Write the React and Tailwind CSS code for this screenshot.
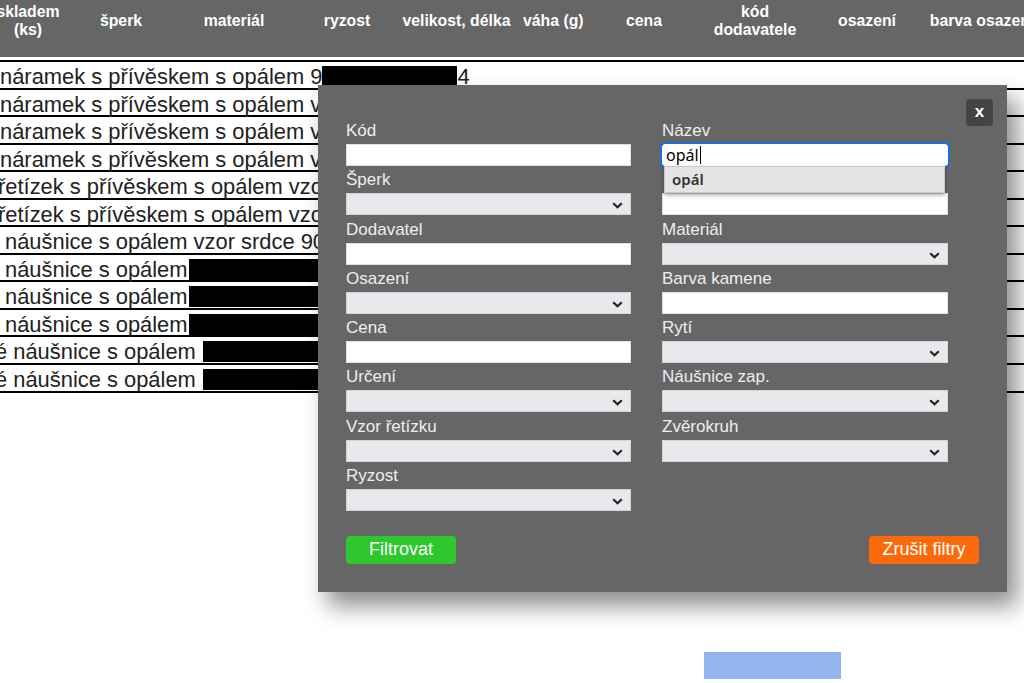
import React from "react";

const headerCols = [
  { w: "w-[100px]", t: ["skladem", "(ks)"] },
  { w: "w-[86px]", t: ["šperk"] },
  { w: "w-[140px]", t: ["materiál"] },
  { w: "w-[86px]", t: ["ryzost"] },
  { w: "w-[133px]", t: ["velikost, délka"] },
  { w: "w-[60px]", t: ["váha (g)"] },
  { w: "w-[122px]", t: ["cena"] },
  { w: "w-[100px]", t: ["kód", "dodavatele"] },
  { w: "w-[124px]", t: ["osazení"] },
  { w: "w-[106px]", t: ["barva osazení"] },
];

const rows = [
  { off: "ml-0", pre: "náramek s přívěskem s opálem 9", box: "w-[135px]", post: "4" },
  { off: "ml-0", pre: "náramek s přívěskem s opálem vzor" },
  { off: "ml-0", pre: "náramek s přívěskem s opálem vzor" },
  { off: "ml-0", pre: "náramek s přívěskem s opálem vzor" },
  { off: "-ml-[2px]", pre: "řetízek s přívěskem s opálem vzor" },
  { off: "-ml-[2px]", pre: "řetízek s přívěskem s opálem vzor" },
  { off: "ml-[5px]", pre: "náušnice s opálem vzor srdce 90" },
  { off: "ml-[5px]", pre: "náušnice s opálem", box: "w-[133px] ml-[1px]" },
  { off: "ml-[5px]", pre: "náušnice s opálem", box: "w-[133px] ml-[1px]" },
  { off: "ml-[5px]", pre: "náušnice s opálem", box: "w-[133px] ml-[1px]" },
  { off: "-ml-[5px]", pre: "é náušnice s opálem", box: "w-[133px] ml-[7px]" },
  { off: "-ml-[5px]", pre: "é náušnice s opálem", box: "w-[133px] ml-[7px]" },
];

function Chevron() {
  return (
    <svg width="11" height="7" viewBox="0 0 11 7" className="absolute right-[7px] top-[8px]">
      <polyline points="1.2,1.2 5.5,5.3 9.8,1.2" fill="none" stroke="#222" strokeWidth="2.2" />
    </svg>
  );
}

function Field({ label, type }) {
  return (
    <div className="mb-[4.3px]">
      <div className="h-[23px] text-[17px] leading-[20px] text-[#eeeeee] whitespace-nowrap">{label}</div>
      {type === "select" ? (
        <div className="relative h-[22px] bg-[#e9e9ed] border border-[#d4d4d8]">
          <Chevron />
        </div>
      ) : (
        <div className="h-[22px] bg-white border border-[#e0e0e0]"></div>
      )}
    </div>
  );
}

export default function App() {
  const left = [
    ["Kód", "input"],
    ["Šperk", "select"],
    ["Dodavatel", "input"],
    ["Osazení", "select"],
    ["Cena", "input"],
    ["Určení", "select"],
    ["Vzor řetízku", "select"],
    ["Ryzost", "select"],
  ];
  const right = [
    ["\u00a0", "input"],
    ["Materiál", "select"],
    ["Barva kamene", "input"],
    ["Rytí", "select"],
    ["Náušnice zap.", "select"],
    ["Zvěrokruh", "select"],
  ];
  return (
    <div className="relative w-[1024px] h-[683px] overflow-hidden bg-white font-['Liberation_Sans',Arial,sans-serif]">
      {/* header */}
      <div className="h-[57px] bg-[#666666] overflow-hidden">
        <div className="h-[42px] flex items-center -ml-[22px] text-[15.8px] leading-[18px] font-bold text-white">
          {headerCols.map((c, i) => (
            <div key={i} className={`${c.w} shrink-0 text-center whitespace-nowrap`}>
              {c.t.map((l, j) => (
                <div key={j}>{l}</div>
              ))}
            </div>
          ))}
        </div>
      </div>

      {/* table rows */}
      <div className="mt-[3px] border-t-2 border-black">
        {rows.map((r, i) => (
          <div
            key={i}
            className="h-[27.55px] border-b-2 border-black flex items-start text-[21.9px] leading-[20.4px] text-[#222] whitespace-nowrap"
          >
            <div className={`${r.off} pt-[5px] flex items-start`}>
              <span>{r.pre}</span>
              {r.box && <span className={`${r.box} inline-block h-[21px] mt-[-1px] bg-black`}></span>}
              {r.post && <span>{r.post}</span>}
            </div>
          </div>
        ))}
      </div>

      {/* blue bar */}
      <div className="mt-[259px] ml-[704px] w-[137px] h-[27px] bg-[#94b4f0]"></div>

      {/* modal */}
      <div className="absolute left-[318px] top-[85px] w-[689px] h-[507px] bg-[#666666] shadow-[10px_14px_22px_rgba(0,0,0,0.45)]">
        <div className="absolute right-[14px] top-[14px] w-[27px] h-[27px] rounded-[4px] bg-[#444444] flex items-center justify-center text-white font-bold text-[17px] leading-none pb-[2px]">
          x
        </div>
        <div className="pt-[36px] pl-[28px] grid grid-cols-[285px_286px] gap-x-[31px]">
          <div>
            {left.map(([l, t]) => (
              <Field key={l} label={l} type={t} />
            ))}
          </div>
          <div>
            <div className="mb-[4.3px] relative">
              <div className="h-[23px] text-[17px] leading-[20px] text-[#eeeeee]">Název</div>
              <div className="h-[22px] bg-white outline-2 outline-[#1a6fe0] rounded-[3px] flex items-center pl-[4px] font-['Noto_Sans',sans-serif] text-[16px] text-black">
                <span>opál</span>
                <span className="inline-block w-[1px] h-[18px] bg-black ml-[1px]"></span>
              </div>
            </div>
            <div className="relative">
              <div className="absolute left-[2px] top-[-4.3px] w-[281px] h-[27px] z-10 bg-[#e4e4e4] border border-[#c8c8c8] shadow-[0_2px_4px_rgba(0,0,0,0.35)] flex items-center pl-[7px] font-['Noto_Sans',sans-serif] text-[15px] font-semibold text-[#333]">
                opál
              </div>
              {right.map(([l, t], i) => (
                <Field key={i} label={l} type={t} />
              ))}
            </div>
          </div>
        </div>
        <div className="mt-[20.6px] px-[28px] flex justify-between">
          <div className="w-[110px] h-[28px] rounded-[4px] bg-[#2ec72e] text-white text-[18px] flex items-center justify-center">
            Filtrovat
          </div>
          <div className="w-[110px] h-[28px] rounded-[4px] bg-[#fb6a0a] text-white text-[18px] flex items-center justify-center">
            Zrušit filtry
          </div>
        </div>
      </div>
    </div>
  );
}
